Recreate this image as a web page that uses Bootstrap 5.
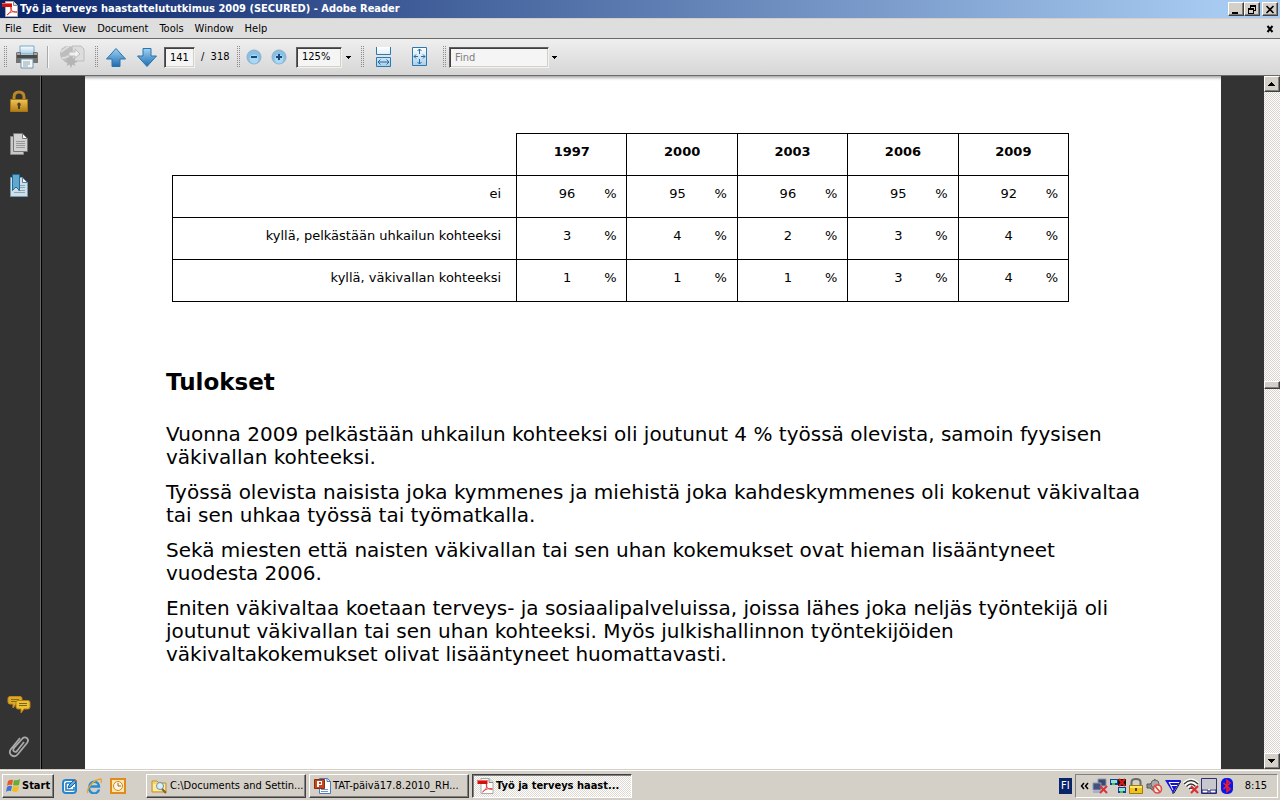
<!DOCTYPE html>
<html lang="fi">
<head>
<meta charset="utf-8">
<meta name="viewport" content="width=device-width, initial-scale=1">
<title>Työ ja terveys haastattelututkimus 2009 (SECURED) - Adobe Reader</title>
<link href="https://cdn.jsdelivr.net/npm/bootstrap@5.3.0/dist/css/bootstrap.min.css" rel="stylesheet">
<style>
body{font-family:"DejaVu Sans Condensed","DejaVu Sans",sans-serif;font-size:11px;line-height:14px;color:#000;background:#333}
svg{display:block;flex:none}
button,input,select{font:inherit;color:inherit}
.plain{background:none;border:0;padding:0;display:flex;align-items:center;justify-content:center;flex:none}
.titlebar{height:18px;background:linear-gradient(90deg,#0a246a,#a6caf0 95%);color:#fff;font-weight:700;padding:0 2px 0 2px;gap:2px}
.titlebar h1{font:inherit;font-size:11px;margin:0}
.raised{background:#d4d0c8;border:1px solid;border-color:#fff #404040 #404040 #fff;box-shadow:inset -1px -1px #808080;border-radius:0;color:#000;padding:0}
.winbtn{width:16px;height:14px;display:flex;align-items:center;justify-content:center}
.menubar{height:20px;background:#dedede;border-top:1px solid #d4d0c8;padding:0 5px}
.menus{gap:11px}
.menubar a{color:#000;text-decoration:none;white-space:nowrap}
.toolbar{height:38px;background:linear-gradient(#efefef,#d6d6d6);border-top:1px solid #6a6a6a;border-bottom:1px solid #6a6a6a;padding-left:3px}
.grip{width:4px;height:22px;flex:none;background:conic-gradient(from 0deg at 50% 50%,#8c8c8c 0 25%,transparent 0) 0 0/2px 2px}
.vsep{width:2px;height:22px;flex:none;background:#aaa;border-right:1px solid #f8f8f8}
.w22{width:22px}.w28{width:28px}.w32{width:32px}.w35{width:35px}.w40{width:40px}.w45{width:45px}
.sunk{border:1px solid;border-color:#606060 #f4f2ec #f4f2ec #606060;box-shadow:inset 1px 1px #404040,inset -1px -1px #d4d0c8;background:#f5f5f5;border-radius:0;appearance:none;height:21px;padding:0 5px;flex:none}
.pageno{width:31px;margin-left:3px}
.pagetotal{width:41px;padding-left:6px;white-space:pre}
.zoombox{margin:0 9px 0 6px}
.zoomsel{width:46px}
.findgroup{margin-left:6px;gap:3px}
.findbox{width:100px}
.findbox::placeholder{color:#808080;opacity:1}
.sidebar{width:42px;flex:none;border-right:1px solid #000;box-shadow:inset -1px 0 #666;padding:14px 4px 11px 0}
.panels{gap:18px}
.viewer{min-height:693px;background:#333}
.sheet{background:#fff;margin:0 43px;padding:57px 81px 0;font-family:"DejaVu Sans",sans-serif;box-shadow:inset 0 4px 3px -2px #aaa}
.survey{margin:0 0 0 6px;width:92.1%;table-layout:fixed;border-collapse:collapse;font-size:13px;line-height:16px}
.survey th,.survey td{border:1px solid #000;height:42px;padding:0 10px 5px 13px;vertical-align:middle}
.survey thead th{text-align:center;padding:0 0 5px;font-weight:700}
.survey thead td{border-top:0;border-left:0}
.survey tbody th{font-weight:400;text-align:right;padding-right:15px}
.labelcol{width:38.4%}
.sheet h2{font-size:23px;line-height:28px;font-weight:700;margin:66px 0 27px}
.sheet p{font-size:20px;line-height:23px;margin:0 0 12px;white-space:nowrap}
.scroller{width:16px;flex:none;background:repeating-conic-gradient(#fff 0 25%,#d8d4cc 0 50%) 0 0/2px 2px}
.scroller button{width:16px;height:16px;display:flex;align-items:center;justify-content:center}
.scroller .thumb{height:8px}
.space-a{flex:289 0 0}.space-b{flex:364 0 0}
.taskbar{height:31px;background:#d4d0c8;border-top:1px solid #d4d0c8;box-shadow:inset 0 1px #fff;padding:2px 2px 0}
.taskbar .raised{height:24px;white-space:nowrap;display:flex;align-items:center}
.taskbar .start{width:52px;font-weight:700;padding:0 2px;gap:1px}
.quick{gap:8px;width:84px}
.tasks{gap:3px}
.taskbar .task{width:160px;padding:0 0 0 4px;gap:2px}
.taskbar .pressed{border-color:#404040 #fff #fff #404040;box-shadow:inset 1px 1px #808080;background:repeating-conic-gradient(#fff 0 25%,#dedad2 0 50%) 0 0/2px 2px;font-weight:700}
.lang{background:#0a246a;color:#fff;width:13px;height:16px;line-height:16px;text-align:center;margin-right:3px}
.tray{height:24px;border:1px solid;border-color:#808080 #fff #fff #808080;padding:0 10px 0 4px;gap:2px}
.clock{margin-left:8px}
</style>
</head>
<body class="min-vh-100 d-flex flex-column">
<svg width="0" height="0" class="position-absolute" aria-hidden="true">
<defs>
<linearGradient id="blue" x2="0" y2="1"><stop stop-color="#9fd3f5"/><stop offset="1" stop-color="#1c6cb0"/></linearGradient>
<linearGradient id="gold" x2="0" y2="1"><stop stop-color="#f0c558"/><stop offset="1" stop-color="#b27b14"/></linearGradient>
<linearGradient id="pale" x2="0" y2="1"><stop stop-color="#fff"/><stop offset="1" stop-color="#a9cfe8"/></linearGradient>
<symbol id="pdf" viewBox="0 0 16 16"><path d="M3.500.5h8l4 4v11h-12z" fill="#fff" stroke="#aaa"/><path d="M11.500.5v4h4" fill="#ddd" stroke="#888"/><path d="M0 2h10v4H0z" fill="#d5110c"/><path d="M0 2h10v1H0z" fill="#f26a5c"/><path d="M5 14c3-2 5-5 4-8-1 3 2 6 6 5-4-1-7 0-10 3z" fill="none" stroke="#e3382f"/></symbol>
</defs>
</svg>

<header>
<div class="titlebar d-flex align-items-center">
<svg width="16" height="16"><use href="#pdf"/></svg>
<h1 class="flex-grow-1 text-nowrap">Työ ja terveys haastattelututkimus 2009 (SECURED) - Adobe Reader</h1>
<div class="d-flex">
<button class="raised winbtn" aria-label="Minimize"><svg width="10" height="9"><path d="M1 7h6v2H1z"/></svg></button>
<button class="raised winbtn" aria-label="Restore"><svg width="10" height="9" shape-rendering="crispEdges"><path d="M3 0h6v6H7V5h1V2H4v1H3zM1 3h6v6H1zM2 5v3h4V5z" fill-rule="evenodd"/></svg></button>
</div>
<button class="raised winbtn" aria-label="Close"><svg width="10" height="9"><path d="M1.500 1l7 7M8.500 1l-7 7" stroke="#000" stroke-width="1.600"/></svg></button>
</div>
<nav class="menubar d-flex align-items-center" aria-label="Main">
<div class="menus d-flex flex-grow-1"><a href="#">File</a><a href="#">Edit</a><a href="#">View</a><a href="#">Document</a><a href="#">Tools</a><a href="#">Window</a><a href="#">Help</a></div>
<button class="plain" aria-label="Close document"><svg width="9" height="8"><path d="M1.500 1l5 6M6.500 1l-5 6" stroke="#000" stroke-width="2"/></svg></button>
</nav>
<div class="toolbar d-flex align-items-center">
<span class="grip"></span>
<button class="plain w40" aria-label="Print"><svg width="24" height="24"><path d="M5 1h14v8H5z" fill="url(#pale)" stroke="#74a9c4"/><path d="M1 8q0-1 2-1h3v3h12V7h3q2 0 2 1v10H1z" fill="#737373"/><path d="M2 10h20v3H2z" fill="#4a4a4a"/><path d="M2 8h3v2H2zM19 8h3v2h-3z" fill="#a5a5a5"/><path d="M6 14h12v9H6z" fill="#f4f8fa" stroke="#7298aa"/><path d="M8 17h7M8 19h7M8 21h5" stroke="#8da3ad"/></svg></button>
<span class="vsep"></span>
<button class="plain w45" aria-label="Collaborate" disabled><svg width="26" height="24"><circle cx="9" cy="9" r="8" fill="#bdbdbd"/><path d="M2 7q6-5 8-5M3 13q7 0 9-6" stroke="#ddd" fill="none" stroke-width="2"/><path d="M13 1h9l3 3v12H14z" fill="#ddd" stroke="#bcbcbc"/><path d="M10 7h6V4l5 5-5 4v-2h-6z" fill="#f0f0f0" stroke="#bcbcbc"/><path d="M12 11l1.500 3 3-1.500-1 3 3.500 1-3.500 1.500 1 3-3-1.500L12 23l-1.500-3.500-3 1.500 1-3L5 16.500l3.500-1-1-3 3 1.500z" fill="#b5b5b5"/></svg></button>
<span class="grip"></span>
<button class="plain w35" aria-label="Previous page"><svg width="20" height="19"><path d="M10 .5L19.500 11H14v7.500H6V11H.5z" fill="url(#blue)" stroke="#2874ad"/></svg></button>
<button class="plain w28" aria-label="Next page"><svg width="20" height="19"><path d="M10 18.500L19.500 8H14V.5H6V8H.5z" fill="url(#blue)" stroke="#2874ad"/></svg></button>
<input class="sunk pageno" value="141" aria-label="Page number">
<span class="pagetotal">/  318</span>
<span class="grip"></span>
<button class="plain w28" aria-label="Zoom out"><svg width="16" height="16"><circle cx="8" cy="8" r="7" fill="#8abfe4" stroke="#8ab0cc"/><circle cx="8" cy="10" r="4.500" fill="#a9d8f4"/><path d="M5 8h6" stroke="#174a78" stroke-width="2"/></svg></button>
<button class="plain w22" aria-label="Zoom in"><svg width="16" height="16"><circle cx="8" cy="8" r="7" fill="#8abfe4" stroke="#8ab0cc"/><circle cx="8" cy="10" r="4.500" fill="#a9d8f4"/><path d="M5 8h6M8 5v6" stroke="#174a78" stroke-width="2"/></svg></button>
<label class="zoombox d-flex align-items-center"><select class="sunk zoomsel" aria-label="Zoom"><option>125%</option></select><svg class="ms-1" width="5" height="3" shape-rendering="crispEdges"><path d="M0 0h5L2.500 3z"/></svg></label>
<span class="grip"></span>
<button class="plain w40" aria-label="Fit width"><svg width="18" height="22"><path d="M1.500 1v7.500h14V1M1.500 20.500v-9h14v9z" fill="url(#pale)" stroke="#2c79b0"/><path d="M3 16h11M5.500 13.500L3 16l2.500 2.500M11.500 13.500L14 16l-2.500 2.500" fill="none" stroke="#236ba4"/></svg></button>
<button class="plain w32" aria-label="Fit page"><svg width="18" height="22"><path d="M1.500 1.500h14v18h-14z" fill="url(#pale)" stroke="#2c79b0"/><path d="M8.500 3v5M8.500 13v5M3 10.500h4M10 10.500h4M6.500 5l2-2 2 2M6.500 16l2 2 2-2M5 8.500l-2 2 2 2M12 8.500l2 2-2 2" fill="none" stroke="#236ba4"/></svg></button>
<div class="findgroup d-flex align-items-center">
<span class="grip"></span>
<input class="sunk findbox" placeholder="Find" aria-label="Find">
<button class="plain" aria-label="Find options"><svg width="5" height="3" shape-rendering="crispEdges"><path d="M0 0h5L2.500 3z"/></svg></button>
</div>
</div>
</header>

<main class="viewer d-flex flex-grow-1">
<nav class="sidebar d-flex flex-column align-items-center justify-content-between" aria-label="Panels">
<div class="panels d-flex flex-column">
<button class="plain" aria-label="Security"><svg width="20" height="24"><path d="M5 12V7q0-5 5-5t5 5v5" fill="none" stroke="#b98724" stroke-width="3"/><path d="M1.500 9.500h17v12h-17z" fill="url(#gold)" stroke="#a57616"/><path d="M10 12.500a2 2 0 011 3.500v3H9v-3a2 2 0 011-3.500" fill="#4d4020"/></svg></button>
<button class="plain" aria-label="Pages"><svg width="20" height="24"><path d="M1.500 4.500h13v18h-13z" fill="#c8c8c8" stroke="#888"/><path d="M4.500 1.500h9l5 5v13h-14z" fill="#d1d1d1" stroke="#777"/><path d="M13.500 1.500v5h5z" fill="#f5f5f5" stroke="#777"/><path d="M7 9.500h9M7 11.500h9M7 13.500h9M7 15.500h9" stroke="#999"/></svg></button>
<button class="plain" aria-label="Bookmarks"><svg width="20" height="24"><path d="M1.500 3.500h12l5 5v14h-17z" fill="#d5dde4" stroke="#6b9cba"/><path d="M13.500 3.500v5h5z" fill="#f5f5f5" stroke="#56819c"/><path d="M9 11.500h7M9 13.500h7M9 16.500h7M5 18.500h11" stroke="#87a9bf"/><path d="M3.500.5h7v16L7 13l-3.500 3.500z" fill="#64a7cd" stroke="#1e6d9a"/></svg></button>
</div>
<div class="panels d-flex flex-column">
<button class="plain" aria-label="Comments"><svg width="24" height="22"><path d="M3 2.500h10q2 0 2 2V8q0 2-2 2H9l-3 4v-4H3Q1 10 1 8V4.500q0-2 2-2z" fill="#d8ad25" stroke="#c4861a"/><path d="M4 5.500h8M4 7.500h6" stroke="#8c681a"/><path d="M11 6.500h10q2 0 2 2V13q0 2-2 2h-4l-3 4v-4h-3q-2 0-2-2V8.500q0-2 2-2z" fill="#e8c335" stroke="#bd7914"/><path d="M12 9.500h8M12 11.500h8" stroke="#80611b"/></svg></button>
<button class="plain" aria-label="Attachments"><svg width="24" height="24"><path d="M17 8l-7 9c-2 2-5 0-3-3l8-9c3-4 8 0 5 4l-9 11c-4 5-11 0-7-5L13 4" fill="none" stroke="#a9a9a9" stroke-width="1.800"/></svg></button>
</div>
</nav>

<article class="sheet flex-grow-1">
<table class="survey">
<colgroup><col class="labelcol"><col><col><col><col><col></colgroup>
<thead><tr><td></td><th scope="col">1997</th><th scope="col">2000</th><th scope="col">2003</th><th scope="col">2006</th><th scope="col">2009</th></tr></thead>
<tbody>
<tr><th scope="row">ei</th><td><div class="d-flex"><span class="flex-fill text-center">96</span><span>%</span></div></td><td><div class="d-flex"><span class="flex-fill text-center">95</span><span>%</span></div></td><td><div class="d-flex"><span class="flex-fill text-center">96</span><span>%</span></div></td><td><div class="d-flex"><span class="flex-fill text-center">95</span><span>%</span></div></td><td><div class="d-flex"><span class="flex-fill text-center">92</span><span>%</span></div></td></tr>
<tr><th scope="row">kyllä, pelkästään uhkailun kohteeksi</th><td><div class="d-flex"><span class="flex-fill text-center">3</span><span>%</span></div></td><td><div class="d-flex"><span class="flex-fill text-center">4</span><span>%</span></div></td><td><div class="d-flex"><span class="flex-fill text-center">2</span><span>%</span></div></td><td><div class="d-flex"><span class="flex-fill text-center">3</span><span>%</span></div></td><td><div class="d-flex"><span class="flex-fill text-center">4</span><span>%</span></div></td></tr>
<tr><th scope="row">kyllä, väkivallan kohteeksi</th><td><div class="d-flex"><span class="flex-fill text-center">1</span><span>%</span></div></td><td><div class="d-flex"><span class="flex-fill text-center">1</span><span>%</span></div></td><td><div class="d-flex"><span class="flex-fill text-center">1</span><span>%</span></div></td><td><div class="d-flex"><span class="flex-fill text-center">3</span><span>%</span></div></td><td><div class="d-flex"><span class="flex-fill text-center">4</span><span>%</span></div></td></tr>
</tbody>
</table>
<h2>Tulokset</h2>
<p>Vuonna 2009 pelkästään uhkailun kohteeksi oli joutunut 4 % työssä olevista, samoin fyysisen<br>väkivallan kohteeksi.</p>
<p>Työssä olevista naisista joka kymmenes ja miehistä joka kahdeskymmenes oli kokenut väkivaltaa<br>tai sen uhkaa työssä tai työmatkalla.</p>
<p>Sekä miesten että naisten väkivallan tai sen uhan kokemukset ovat hieman lisääntyneet<br>vuodesta 2006.</p>
<p>Eniten väkivaltaa koetaan terveys- ja sosiaalipalveluissa, joissa lähes joka neljäs työntekijä oli<br>joutunut väkivallan tai sen uhan kohteeksi. Myös julkishallinnon työntekijöiden<br>väkivaltakokemukset olivat lisääntyneet huomattavasti.</p>
</article>

<div class="scroller d-flex flex-column">
<button class="raised" aria-label="Scroll up"><svg width="8" height="4" shape-rendering="crispEdges"><path d="M0 4h7L3.500 0z"/></svg></button>
<div class="space-a"></div>
<button class="raised thumb" aria-label="Scroll position"></button>
<div class="space-b"></div>
<button class="raised" aria-label="Scroll down"><svg width="8" height="4" shape-rendering="crispEdges"><path d="M0 0h7L3.500 4z"/></svg></button>
</div>
</main>

<footer class="taskbar d-flex align-items-center">
<button class="raised start"><svg width="16" height="16"><path d="M3 3q3-2 5-1L7 7Q4 6 2 8z" fill="#e85a22"/><path d="M9 2q3 1 6-1l-1 6q-3 1-6 0z" fill="#68ad36"/><path d="M2 9q2-2 5-1l-1 5q-3-1-5 1z" fill="#3c76d8"/><path d="M8 8q3 1 6 0l-1 5q-3 2-6 0z" fill="#f5bd22"/></svg>Start</button>
<div class="quick d-flex align-items-center ms-2">
<button class="plain" aria-label="Show desktop"><svg width="16" height="16"><rect x="1" y="2" width="13" height="13" rx="3" fill="#fff" stroke="#2685cf" stroke-width="2"/><path d="M4 5h5M4 5v7h8V9" stroke="#1978c2" stroke-width="1.500" fill="none"/><path d="M6 10l1-3 5-5 2 2-5 5z" fill="#55aee8" stroke="#1260a5"/><path d="M12 2l2 2 1-1-2-2z" fill="#d65a23"/></svg></button>
<button class="plain" aria-label="Internet Explorer"><svg width="16" height="16"><path d="M13 11.500A5 5 0 113.500 8.500H13A4.700 4.700 0 003.500 8.500" fill="none" stroke="#258bd5" stroke-width="2.400"/><path d="M2 15C-1 13 7 1 15 1q1 1 0 4" fill="none" stroke="#e9a62e" stroke-width="1.300"/></svg></button>
<button class="plain" aria-label="Outlook"><svg width="16" height="16"><path d="M1 1h14v14H1z" fill="#ffe8aa" stroke="#e08b1e" stroke-width="2"/><circle cx="8" cy="8" r="4.500" fill="#fff7e3" stroke="#cf852c"/><path d="M8 5v3h3" fill="none" stroke="#a05c16"/></svg></button>
</div>
<div class="tasks d-flex me-auto">
<button class="raised task"><svg width="17" height="16"><path d="M1 3h5l2 2h7v9H1z" fill="#f8d66e" stroke="#c4912e"/><path d="M2 6h12v7H2z" fill="#ffeaa0"/><circle cx="9" cy="8" r="3.500" fill="#d6f1fb" stroke="#6f90a0"/><path d="M11 11l4 4" stroke="#826130" stroke-width="2"/></svg><span>C:\Documents and Settin...</span></button>
<button class="raised task"><svg width="17" height="16"><path d="M5.500.5h8l3 3v12h-11z" fill="#fff" stroke="#4c78bc"/><path d="M13 .5v3h3.500" fill="none" stroke="#4c78bc"/><path d="M7 11.500h7M7 13.500h7" stroke="#7194ca"/><path d="M.5 1.500h10v9H.5z" fill="#c3461d" stroke="#8d2c0e"/><path d="M3 3h5v4H5v2H3z" fill="#fff"/><path d="M5 4h2v2H5z" fill="#c3461d"/></svg><span>TAT-päivä17.8.2010_RH...</span></button>
<button class="raised task pressed"><svg width="17" height="16"><use href="#pdf"/></svg><span>Työ ja terveys haast...</span></button>
</div>
<span class="lang">FI</span>
<div class="tray d-flex align-items-center">
<button class="plain" aria-label="Show hidden icons"><svg width="10" height="8"><path d="M4 1L1.500 4 4 7M8 1L5.500 4 8 7" fill="none" stroke="#000" stroke-width="1.500"/></svg></button>
<svg width="16" height="16"><path d="M6 1h8v7H6z" fill="#39496e" stroke="#9098b5"/><path d="M1 5h8v7H1z" fill="#44537e" stroke="#9098b5"/><path d="M1 13h7v2H1z" fill="#a9add0"/><path d="M8 8l7 7M15 8l-7 7" stroke="#d9343a" stroke-width="2"/></svg>
<svg width="16" height="16"><path d="M0 1h8v6H0zM8 9h8v6H8z" fill="#1e3c92"/><path d="M1 2h6v3H1zM9 10h6v3H9z" fill="#8be3dc"/><path d="M2 5h3v2H2zM10 13h3v2h-3z" fill="#48bb4a"/><path d="M8 1h8v7H8z" fill="#111"/><path d="M9 1l6 7M15 1L9 8" stroke="#e01717" stroke-width="2"/></svg>
<svg width="16" height="16"><path d="M3.500 8V4q0-3 4.500-3t4.500 3v4" fill="none" stroke="#696969" stroke-width="2"/><path d="M1.500 7.500h13v8h-13z" fill="#f2c21a" stroke="#9e7717"/><path d="M2 9h12" stroke="#ffe56a" stroke-width="2"/><path d="M7 10h2v3H7z" fill="#5b4412"/></svg>
<svg width="17" height="16"><path d="M1 6h3l5-5v13l-5-4H1z" fill="#8b8b8b" stroke="#555"/><circle cx="9" cy="6" r="4" fill="#aaa" stroke="#666"/><circle cx="11.500" cy="11" r="4" fill="#eee" stroke="#e24a3d" stroke-width="1.600"/><path d="M9 8l5 6" stroke="#e24a3d" stroke-width="1.600"/></svg>
<svg width="16" height="16"><path d="M0 2h16L8 15z" fill="#1114d8"/><path d="M4 4.500h10M6 7.500h6M4 4l4 8" stroke="#fff" fill="none"/><path d="M7 15h2l7-12" stroke="#080838" fill="none"/></svg>
<svg width="16" height="16"><path d="M1 6q7-7 14 0M3.500 8.500q4.500-5 9 0M6 11q2-2 4 0" fill="none" stroke="#fff" stroke-width="4"/><path d="M1 6q7-7 14 0M3.500 8.500q4.500-5 9 0M6 11q2-2 4 0" fill="none" stroke="#333" stroke-width="1.300"/><path d="M8 8l7 7M15 8l-7 7" stroke="#df2931" stroke-width="2"/></svg>
<svg width="16" height="16"><path d="M.5.500h15v15H.5z" fill="#c8c8cc" stroke="#303078"/><path d="M2 11.500h12" stroke="#fff"/><path d="M1 12h6v3H1zM9 12h6v3H9z" fill="#fff" stroke="#171779"/></svg>
<svg width="16" height="16"><rect x="2" y="0" width="12" height="16" rx="5" fill="#0917ed"/><path d="M4.500 5l6.500 6-3 2.500V2.500L11 5l-6.500 6" fill="none" stroke="#f11e28" stroke-width="1.600"/></svg>
<span class="clock">8:15</span>
</div>
</footer>
<script src="https://cdn.jsdelivr.net/npm/bootstrap@5.3.0/dist/js/bootstrap.bundle.min.js"></script>
</body>
</html>
